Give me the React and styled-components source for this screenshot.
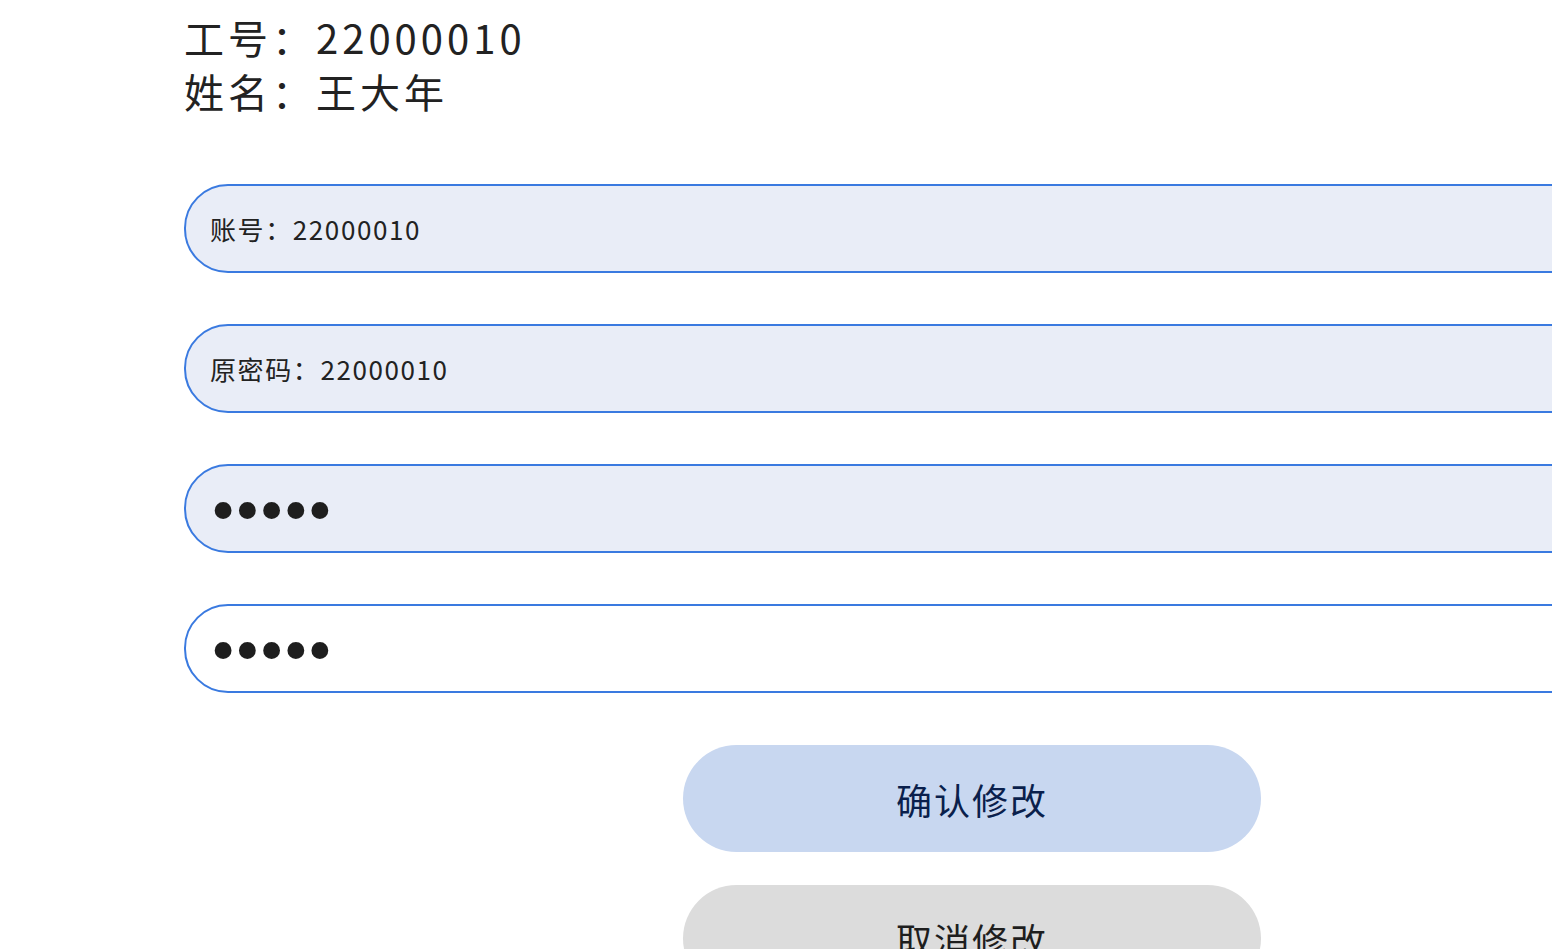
import React from "react";
import styled, { createGlobalStyle } from "styled-components";

const Global = createGlobalStyle`
  html, body {
    margin: 0;
    padding: 0;
    background: #ffffff;
    overflow: hidden;
  }
  body {
    font-family: "Noto Sans CJK SC", "Noto Sans", sans-serif;
    color: #222;
  }
`;

const Page = styled.div`
  padding: 10px 0 0 184px;
`;

const Info = styled.div`
  font-size: 40px;
  line-height: 54px;
  letter-spacing: 4px;
  color: #222;
`;

const Form = styled.form`
  width: 1576px;
  margin-top: 66px;
  display: flex;
  flex-direction: column;
  align-items: center;
`;

const Field = styled.input`
  box-sizing: border-box;
  width: 100%;
  height: 89px;
  margin-bottom: 51px;
  padding: 0 24px;
  border: 2px solid #3a7ae0;
  border-radius: 44px;
  background: ${(p) => (p.$filled ? "#e9edf7" : "#ffffff")};
  font-family: "Noto Sans CJK SC", "Noto Sans", sans-serif;
  font-size: 26px;
  letter-spacing: 1.6px;
  color: #222;
  outline: none;

  &[type="password"] {
    padding: 7px 24px 0 20px;
    font-family: "DejaVu Sans", sans-serif;
    font-size: 58px;
    letter-spacing: -10px;
    color: #1e1e1e;
  }
`;

const Button = styled.button`
  box-sizing: border-box;
  width: 578px;
  height: 107px;
  margin-bottom: 33px;
  border: none;
  border-radius: 54px;
  background: ${(p) => (p.$primary ? "#c8d7f0" : "#dcdcdc")};
  color: ${(p) => (p.$primary ? "#0a1f4c" : "#1e1e1e")};
  font-family: "Noto Sans CJK SC", "Noto Sans", sans-serif;
  font-size: 36px;
  letter-spacing: 2px;
  cursor: pointer;
  &:first-of-type {
    margin-top: 1px;
  }
`;

export default function App() {
  return (
    <Page>
      <Global />
      <Info>
        <div>工号：22000010</div>
        <div>姓名：王大年</div>
      </Info>
      <Form onSubmit={(e) => e.preventDefault()}>
        <Field $filled defaultValue="账号：22000010" />
        <Field $filled defaultValue="原密码：22000010" />
        <Field $filled type="password" defaultValue="12345" />
        <Field type="password" defaultValue="12345" />
        <Button $primary type="submit">确认修改</Button>
        <Button type="button">取消修改</Button>
      </Form>
    </Page>
  );
}
